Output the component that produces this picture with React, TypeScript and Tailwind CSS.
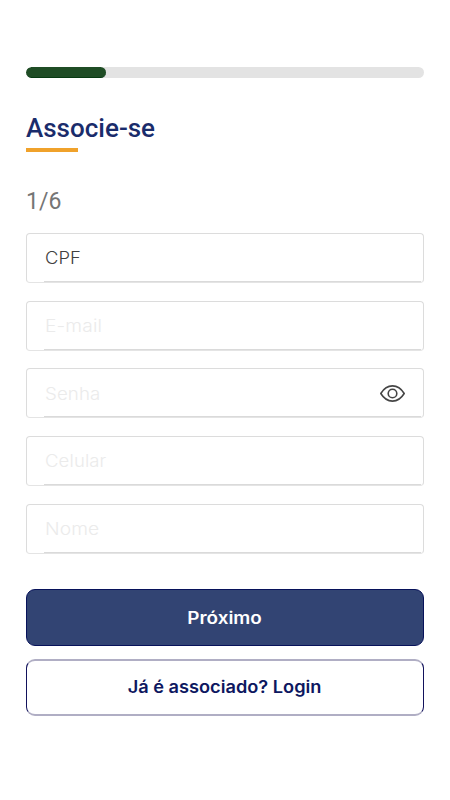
import type { FormEvent } from 'react'
import { useState } from 'react'

type FieldName = 'cpf' | 'email' | 'password' | 'phone' | 'name'

const fields: { name: FieldName; label: string; type: string; style: string }[] = [
    { name: 'cpf', label: 'CPF', type: 'text', style: 'placeholder:text-[#404040] scale-x-[1.08]' },
    { name: 'email', label: 'E-mail', type: 'email', style: 'placeholder:text-[#ebebeb] scale-x-[1.13]' },
    { name: 'password', label: 'Senha', type: 'password', style: 'placeholder:text-[#ebebeb] scale-x-[1.1]' },
    { name: 'phone', label: 'Celular', type: 'tel', style: 'placeholder:text-[#ebebeb] scale-x-[1.09]' },
    { name: 'name', label: 'Nome', type: 'text', style: 'placeholder:text-[#ebebeb] scale-x-[1.13]' },
]

export default function App() {
    const [values, setValues] = useState<Record<FieldName, string>>({ cpf: '', email: '', password: '', phone: '', name: '' })
    const [showPassword, setShowPassword] = useState(false)

    const submit = (event: FormEvent) => {
        event.preventDefault()
    }

    return (
        <main className="flex h-[800px] w-full flex-col bg-white px-[26px] pt-[67px] font-[Inter,sans-serif]">
            <div className="h-[11px] shrink-0 overflow-hidden rounded-full bg-[#e3e3e3]">
                <div className="h-full w-20 rounded-full border-b border-[#073b12] bg-[#1f4d25]"></div>
            </div>

            <h1 className="mt-[34px] h-8 font-[Roboto,sans-serif] text-[26px] leading-8 font-medium text-[#1a2c6b]">Associe-se</h1>
            <div className="mt-1 h-1 w-[52px] shrink-0 bg-[#f0a22b]"></div>
            <p className="mt-[34px] h-[31px] font-[Roboto,sans-serif] text-[23px] leading-8 text-[#757575]">1/6</p>

            <form className="mt-4 flex flex-col" onSubmit={submit}>
                <div className="flex flex-col gap-[17.7px]">
                    {fields.map((field) => (
                        <div key={field.name} className="relative flex h-[50px] items-center justify-between rounded-[4px] border border-[#dcdcdc] border-b-[#e4e4e4] px-[18px]">
                            <input
                                aria-label={field.label}
                                type={field.name === 'password' && showPassword ? 'text' : field.type}
                                placeholder={field.label}
                                value={values[field.name]}
                                onChange={(event) => setValues({ ...values, [field.name]: event.target.value })}
                                className={`w-[280px] origin-left bg-transparent pt-0.5 text-[17px] font-light tracking-[0.1px] outline-none ${field.style}`}
                            />
                            {field.name === 'password' ? (
                                <button type="button" aria-label="Mostrar senha" onClick={() => setShowPassword(!showPassword)}>
                                    <EyeIcon />
                                </button>
                            ) : null}
                            <span className="absolute right-0.5 bottom-0 left-[17px] h-px bg-[#dadada]"></span>
                        </div>
                    ))}
                </div>

                <button type="submit" className="mt-[35.2px] h-[57px] rounded-[9px] border border-[#07125a] bg-[#324473] pt-0.5 text-[17px] font-semibold text-white">
                    <span className="inline-block scale-x-[1.11]">Próximo</span>
                </button>
                <button type="button" className="mt-[13px] h-[57px] rounded-[9px] border border-y-2 border-[#12125c] border-y-[#b0aec4] bg-white text-[17px] font-semibold text-[#0d1760]">
                    <span className="inline-block scale-x-[1.07]">Já é associado? Login</span>
                </button>
            </form>
        </main>
    )
}

function EyeIcon() {
    return (
        <svg width="25" height="17" viewBox="0 0 25 17" fill="none" stroke="#454545" strokeWidth="1.6" strokeLinejoin="round">
            <path d="M.8 8.5C4 3.3 7.7.9 12.5.9s8.5 2.4 11.7 7.6c-3.2 5.2-6.9 7.6-11.7 7.6S4 13.7.8 8.5Z" />
            <circle cx="12.5" cy="8.5" r="4.3" />
        </svg>
    )
}
